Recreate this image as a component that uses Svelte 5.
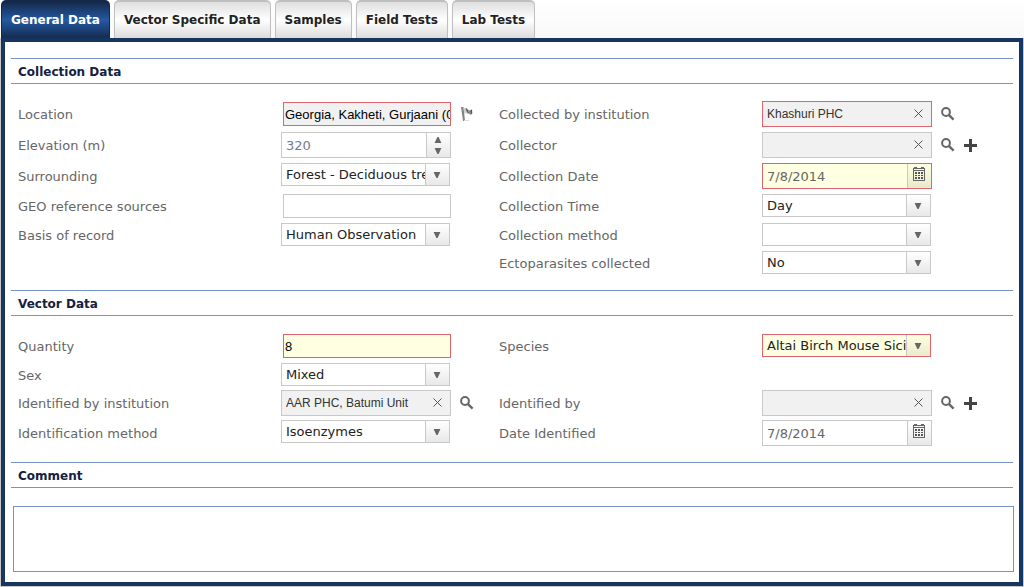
<script>
  const tabs = ['General Data', 'Vector Specific Data', 'Samples', 'Field Tests', 'Lab Tests'];
  let active = $state('General Data');

  const sections = [
    {
      title: 'Collection Data',
      gap: 'wide',
      rows: [
        [
          { id: 'location', label: 'Location', kind: 'text', value: 'Georgia, Kakheti, Gurjaani (01)', look: 'required locked', map: true },
          { id: 'institution', label: 'Collected by institution', kind: 'lookup', value: 'Khashuri PHC', look: 'required' }
        ],
        [
          { id: 'elevation', label: 'Elevation (m)', kind: 'spin', value: '320' },
          { id: 'collector', label: 'Collector', kind: 'lookup', value: '', add: true }
        ],
        [
          { id: 'surrounding', label: 'Surrounding', kind: 'select', value: 'Forest - Deciduous trees' },
          { id: 'cdate', label: 'Collection Date', kind: 'date', value: '7/8/2014', look: 'required filled' }
        ],
        [
          { id: 'geo', label: 'GEO reference sources', kind: 'text', value: '' },
          { id: 'ctime', label: 'Collection Time', kind: 'select', value: 'Day' }
        ],
        [
          { id: 'basis', label: 'Basis of record', kind: 'select', value: 'Human Observation' },
          { id: 'cmethod', label: 'Collection method', kind: 'select', value: '' }
        ],
        [null, { id: 'ecto', label: 'Ectoparasites collected', kind: 'select', value: 'No' }]
      ]
    },
    {
      title: 'Vector Data',
      gap: 'narrow',
      rows: [
        [
          { id: 'quantity', label: 'Quantity', kind: 'text', value: '8', look: 'required filled' },
          { id: 'species', label: 'Species', kind: 'select', value: 'Altai Birch Mouse Sicista napaea', look: 'required filled' }
        ],
        [{ id: 'sex', label: 'Sex', kind: 'select', value: 'Mixed' }, null],
        [
          { id: 'idinst', label: 'Identified by institution', kind: 'lookup', value: 'AAR PHC, Batumi Unit' },
          { id: 'idby', label: 'Identified by', kind: 'lookup', value: '', add: true }
        ],
        [
          { id: 'idmethod', label: 'Identification method', kind: 'select', value: 'Isoenzymes' },
          { id: 'iddate', label: 'Date Identified', kind: 'date', value: '7/8/2014' }
        ]
      ]
    }
  ];
</script>

{#snippet down()}
  <svg width="8" height="6" viewBox="0 0 8 6" aria-hidden="true"><path d="M.6 0h6.8L4.6 6H3.4z" fill="#666" /></svg>
{/snippet}

{#snippet field(f)}
  {#if f}
    <label for={f.id}>{f.label}</label>
    <div class="control" class:top={f.kind === 'select'}>
      {#if f.kind === 'text'}
        <input id={f.id} class="plain {f.look ?? ''}" type="text" value={f.value} />
      {:else if f.kind === 'select'}
        <div class="box combo {f.look ?? ''}">
          <select id={f.id}><option>{f.value}</option></select>
          <span class="side">{@render down()}</span>
        </div>
      {:else if f.kind === 'spin'}
        <div class="box tall">
          <input id={f.id} class="number" type="text" value={f.value} />
          <div class="side steps">
            <button type="button" aria-label="Increase">
              <svg width="8" height="6" viewBox="0 0 8 6"><path d="M.6 6h6.8L4.6 0H3.4z" fill="#666" /></svg>
            </button>
            <button type="button" aria-label="Decrease">{@render down()}</button>
          </div>
        </div>
      {:else if f.kind === 'date'}
        <div class="box tall {f.look ?? ''}">
          <input id={f.id} type="text" value={f.value} />
          <button type="button" class="side calendar" aria-label="Open calendar">
            <svg width="12" height="14" viewBox="0 0 12 14" shape-rendering="crispEdges">
              <path fill="#666" d="M1 0h3v1h4V0h3v1h1v13H0V1h1zM1 4v9h10V4zM1 2v1h10V2z" fill-rule="evenodd" />
              <path fill="#555" d="M2 5h2v2H2zM5 5h2v2H5zM8 5h2v2H8zM2 8h2v1H2zM5 8h2v1H5zM8 8h2v1H8zM2 10h2v2H2zM5 10h2v2H5zM8 10h2v2H8z" />
            </svg>
          </button>
        </div>
      {:else}
        <div class="box tall lookup {f.look ?? ''}">
          <input id={f.id} type="text" value={f.value} />
          <button type="button" class="clear" aria-label="Clear">
            <svg width="9" height="9" viewBox="0 0 9 9"><path d="M.5.5l8 8M8.5.5l-8 8" stroke="#555" stroke-width="1" /></svg>
          </button>
        </div>
        <button type="button" class="icon" aria-label="Search">
          <svg width="14" height="14" viewBox="0 0 14 14" fill="none">
            <circle cx="5" cy="5" r="3.9" stroke="#666" stroke-width="2" />
            <path d="M8 8.2l4.6 4.4" stroke="#666" stroke-width="2.4" />
          </svg>
        </button>
        {#if f.add}
          <button type="button" class="icon" aria-label="Add">
            <svg width="13" height="13" viewBox="0 0 13 13"><path d="M5 0h3v5h5v3H8v5H5V8H0V5h5z" fill="#444" /></svg>
          </button>
        {/if}
      {/if}
      {#if f.map}
        <button type="button" class="icon" aria-label="Show on map">
          <svg width="14" height="16" viewBox="0 0 14 16">
            <path d="M1 1l2.5 0 1.500 14H3z" fill="#858585" />
            <path d="M3.500 2.500Q5 1 7 3.500L8 8.500Q6 6 4.300 7.500z" fill="#c9cdcf" />
            <path d="M5.500 2Q7 2 8 4l1.500 4Q7.500 8 6.500 5z" fill="#555e62" />
            <path d="M8 3.500l2 1 1.500-.5.5 4q-2 1.500-3-.5z" fill="#858d90" />
            <path d="M10.500 4l1.500-.5.3 4-1 .5z" fill="#4e5558" />
            <path d="M4 14.500h5" stroke="#ddd" />
          </svg>
        </button>
      {/if}
    </div>
  {:else}
    <span></span><span></span>
  {/if}
{/snippet}

<main>
  <div class="tabs" role="tablist">
    {#each tabs as tab}
      <button type="button" role="tab" aria-selected={active === tab} class:active={active === tab} onclick={() => (active = tab)}>{tab}</button>
    {/each}
  </div>
  <form class="panel">
    {#each sections as s}
      <section>
        <h2>{s.title}</h2>
        <div class="rows {s.gap}">
          {#each s.rows as row}
            <div class="row">
              {@render field(row[0])}
              {@render field(row[1])}
            </div>
          {/each}
        </div>
      </section>
    {/each}
    <section>
      <h2 id="comment-title">Comment</h2>
      <textarea aria-labelledby="comment-title"></textarea>
    </section>
  </form>
</main>

<style>
  :global(body) { background: #fff; }
  main {
    font: 13px/18px Verdana, "DejaVu Sans", sans-serif;
    color: #666;
  }
  * { box-sizing: border-box; }
  button, input, select, textarea { font: inherit; margin: 0; border-radius: 0; outline: none; }
  button { padding: 0; border: 0; background: none; cursor: pointer; }
  svg { display: block; }

  .tabs {
    display: flex;
    gap: 4px;
    height: 38px;
    padding-left: 1px;
    background: linear-gradient(#fff, #f8f8f8);
  }
  .tabs button {
    padding: 0 9px;
    border: 1px solid #bfbfbf;
    border-top-width: 2px;
    border-bottom: 0;
    border-radius: 5px 5px 0 0;
    background: linear-gradient(#dedede, #fff 50%, #dcdcdc);
    color: #222;
    font-size: 12px;
    font-weight: bold;
  }
  .tabs button.active {
    border-color: #14294a;
    background: linear-gradient(#15294b, #2459a2 50%, #142c50);
    color: #fff;
  }

  .panel {
    margin: 0 1px 1px;
    padding: 16px 6px 10px;
    border: 4px solid #17365f;
    box-shadow: 0 0 0 1px #c9c6c8;
    clip-path: inset(0 -1px -1px -1px);
  }
  section { margin-bottom: 16px; }
  section:last-child { margin-bottom: 0; }
  h2 {
    margin: 0;
    padding: 2px 7px 0;
    border: solid #7593bf;
    border-width: 1px 0;
    color: #14213f;
    font-size: 12px;
    line-height: 22px;
  }
  .rows {
    display: flex;
    flex-direction: column;
    padding: 17px 0 0 7px;
  }
  .wide { gap: 5px; }
  .narrow { gap: 4px; }
  .row {
    display: grid;
    grid-template-columns: 263fr 218fr 263fr 251fr;
    align-items: center;
  }
  .narrow .row:first-child { padding: 1px 0; }
  label { padding-top: 2px; }
  .control { display: flex; align-items: center; gap: 9px; }
  .top { align-self: start; }

  .plain {
    width: 168px;
    height: 24px;
    margin-left: 2px;
    padding: 0 0 0 1px;
    border: 1px solid #c8c8c8;
    background: #fff;
    color: #000;
    font-family: Arial, "Liberation Sans", sans-serif;
  }
  .box {
    display: grid;
    grid-template-columns: 1fr 24px;
    width: 170px;
    border: 1px solid #c8c8c8;
    background: #fff;
  }
  .tall { height: 26px; }
  .combo { width: 169px; height: 23px; }
  .box input, .box select {
    appearance: none;
    min-width: 0;
    width: 100%;
    height: 100%;
    padding: 0 0 0 4px;
    border: 0;
    background: transparent;
    color: #666;
  }
  .box select {
    grid-area: 1 / 1 / 2 / 3;
    padding-right: 24px;
    color: #222;
  }
  .box .number { color: #737b94; }
  .side {
    grid-area: 1 / 2;
    display: grid;
    place-items: center;
    padding-right: 1px;
    border-left: 1px solid #c8c8c8;
    background: linear-gradient(#fff, #e8e8e8);
    pointer-events: none;
  }
  .steps, .calendar { pointer-events: auto; }
  .calendar { align-content: start; padding-top: 3px; }
  .steps { padding: 2px 1px 1px 0; }
  .steps button { padding: 2px 7px; }

  .lookup, .locked { background: #f1f1f1; }
  .box.lookup input {
    color: #333;
    font-family: Arial, "Liberation Sans", sans-serif;
    font-size: 12px;
  }
  .clear { display: grid; place-items: center; padding: 0 1px 2px 0; }
  .filled { background: #ffffe1; }
  .filled .side { background: linear-gradient(#ffffe1, #e9e9cc); }
  .required { border-color: #e0646b; }

  textarea {
    display: block;
    width: calc(100% - 1px);
    height: 66px;
    margin: 18px 0 0 2px;
    border: 1px solid #7593bf;
    background: #fff;
    resize: none;
  }
</style>
